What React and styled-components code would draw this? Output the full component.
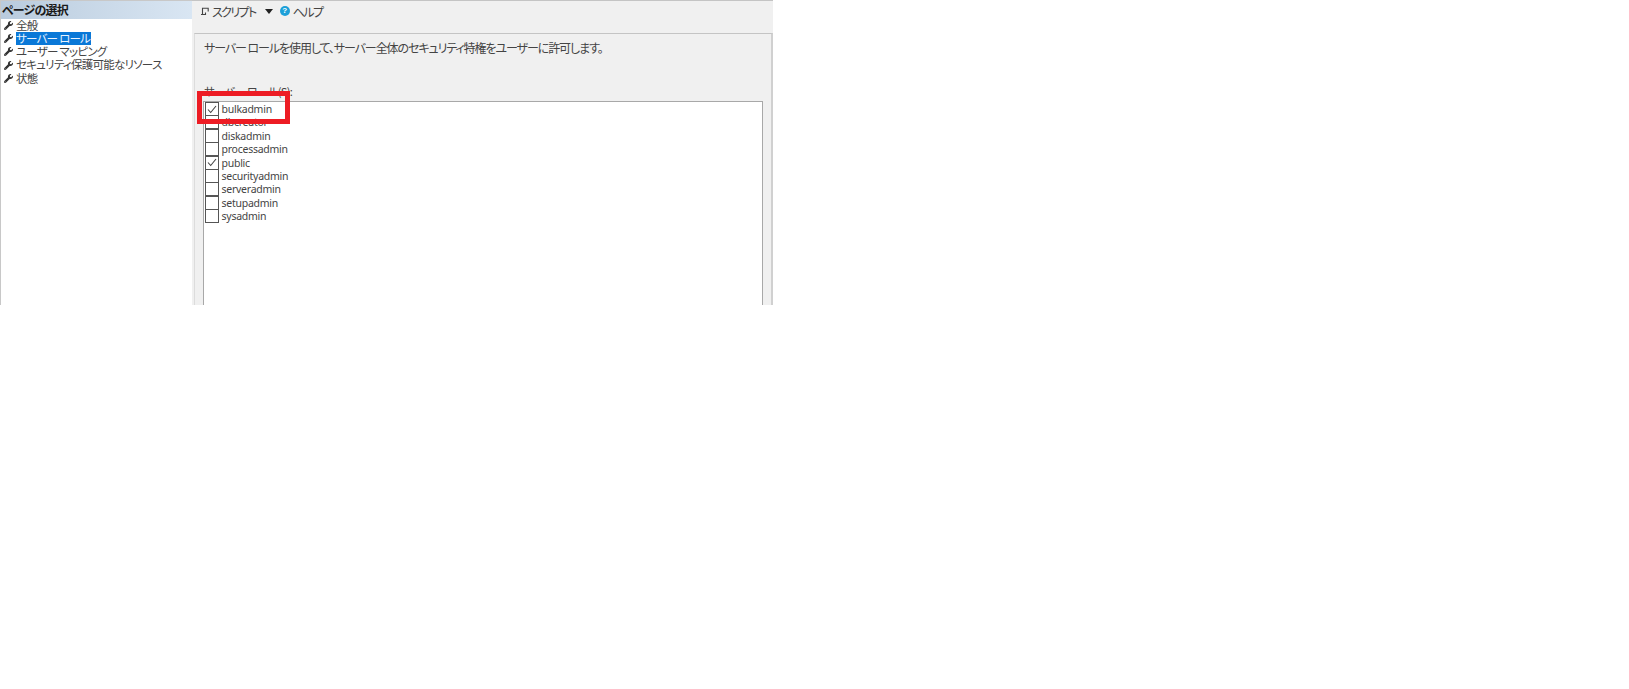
import React from "react";
import styled, { createGlobalStyle } from "styled-components";
import { FaWrench } from "react-icons/fa";

const Global = createGlobalStyle`
  html, body { margin: 0; padding: 0; background: #fff; }
  body {
    font-family: "Noto Sans CJK JP", "Noto Sans", sans-serif;
    font-feature-settings: "palt" 1;
  }
`;

const Window = styled.div`
  position: relative;
  display: flex;
  width: 773px;
  height: 305px;
  overflow: hidden;
`;

const Sidebar = styled.aside`
  flex: 0 0 192px;
  box-sizing: border-box;
  border-left: 1px solid #c8c8c8;
  border-top: 1px solid #c8c8c8;
  background: #fff;
`;

const SideHeader = styled.div`
  height: 17.6px;
  padding-left: 1px;
  display: flex;
  align-items: center;
  background: linear-gradient(90deg, #b9cbdd, #d9e6f3);
  font-size: 12px;
  font-weight: 700;
  letter-spacing: -0.8px;
  color: #1a1a1a;
  white-space: nowrap;
`;

const PageRow = styled.div`
  display: flex;
  align-items: center;
  height: 13.3px;
  padding-left: 3px;
  white-space: nowrap;
  color: #444;
  svg { flex: none; width: 9px; height: 9px; color: #333; margin-right: 3px; }
`;

const PageLabel = styled.span`
  display: inline-block;
  height: 13.3px;
  line-height: 13px;
  font-size: 11.5px;
  letter-spacing: -0.75px;
  padding-right: 1px;
  color: ${(p) => (p.$active ? "#e8f3ff" : "#444")};
  background: ${(p) => (p.$active ? "#0a78d7" : "transparent")};
`;

const Main = styled.main`
  flex: 1;
  display: flex;
  flex-direction: column;
  background: #f0f0f0;
  min-width: 0;
`;

const Toolbar = styled.div`
  flex: 0 0 33px;
  box-sizing: border-box;
  border-top: 1px solid #c4c4c4;
  padding: 0 0 12px 8px;
  display: flex;
  align-items: center;
  color: #444;
  font-size: 12px;
  letter-spacing: -1.6px;
  svg { flex: none; }
`;

const ToolText = styled.span`
  white-space: nowrap;
  margin-left: ${(p) => p.$gap || 0}px;
`;

const Caret = styled.span`
  width: 0;
  height: 0;
  margin: 1px 7px 0 9px;
  border-left: 4px solid transparent;
  border-right: 4px solid transparent;
  border-top: 5px solid #222;
`;

const HelpDot = styled.span`
  width: 10px;
  height: 10px;
  border-radius: 50%;
  background: #1c9fd8;
  color: #fff;
  font: 700 8px/10px "Liberation Sans", sans-serif;
  letter-spacing: 0;
  text-align: center;
`;

const Group = styled.section`
  flex: 1;
  margin-left: 2px;
  box-sizing: border-box;
  border-top: 1px solid #c4c4c4;
  border-right: 2px solid #d0d0d0;
  border-left: 1px solid #dcdcdc;
  padding: 7px 8px 0 8px;
  display: flex;
  flex-direction: column;
`;

const Description = styled.p`
  margin: 0 0 0 1px;
  height: 14px;
  line-height: 14px;
  font-size: 12px;
  letter-spacing: -1.08px;
  color: #444;
  white-space: nowrap;
`;

const ListCaption = styled.div`
  margin: 28px 0 0 1px;
  height: 18px;
  line-height: 16px;
  font-size: 11px;
  font-feature-settings: normal;
  letter-spacing: -0.7px;
  color: #444;
  white-space: nowrap;
`;

const RoleList = styled.div`
  flex: 1;
  border: 1px solid #a8a8a8;
  border-bottom: 0;
  background: #fff;
  padding: 0.3px 0 0 1px;
`;

const RoleRow = styled.label`
  display: flex;
  align-items: center;
  height: 13.4px;
`;

const Box = styled.span`
  flex: none;
  box-sizing: border-box;
  width: 14px;
  height: 14px;
  border: 1px solid #555;
  background: #fff;
  display: flex;
  align-items: center;
  justify-content: center;
`;

const RoleName = styled.span`
  margin-left: 2.5px;
  font-family: "Noto Sans", sans-serif;
  font-size: 10.5px;
  letter-spacing: -0.25px;
  color: #444;
`;

const Callout = styled.div`
  position: absolute;
  left: 197px;
  top: 91px;
  width: 93px;
  height: 33px;
  box-sizing: border-box;
  border: 5px solid #ed1c24;
  pointer-events: none;
`;

const pages = ["全般", "サーバー ロール", "ユーザー マッピング", "セキュリティ保護可能なリソース", "状態"];
const roles = [
  ["bulkadmin", true],
  ["dbcreator", false],
  ["diskadmin", false],
  ["processadmin", false],
  ["public", true],
  ["securityadmin", false],
  ["serveradmin", false],
  ["setupadmin", false],
  ["sysadmin", false],
];

const Check = () => (
  <svg width="10" height="9" viewBox="0 0 10 9" fill="none" stroke="#444" strokeWidth="1.1">
    <path d="M1 4.5 L3.7 7.5 L9 1" />
  </svg>
);

const ScriptIcon = () => (
  <svg width="9" height="9" viewBox="0 0 9 9" fill="none" stroke="#444" strokeWidth="1.1">
    <path d="M2.5 7V1.2H8.2V4.5M1 7.5H5.5V5.5" />
  </svg>
);

export default function App() {
  return (
    <>
      <Global />
      <Window>
        <Sidebar>
          <SideHeader>ページの選択</SideHeader>
          {pages.map((p, i) => (
            <PageRow key={p}>
              <FaWrench />
              <PageLabel $active={i === 1}>{p}</PageLabel>
            </PageRow>
          ))}
        </Sidebar>
        <Main>
          <Toolbar>
            <ScriptIcon />
            <ToolText $gap={3}>スクリプト</ToolText>
            <Caret />
            <HelpDot>?</HelpDot>
            <ToolText $gap={3}>ヘルプ</ToolText>
          </Toolbar>
          <Group>
            <Description>サーバー ロールを使用して、サーバー全体のセキュリティ特権をユーザーに許可します。</Description>
            <ListCaption>サーバー ロール(S):</ListCaption>
            <RoleList>
              {roles.map(([name, on]) => (
                <RoleRow key={name}>
                  <Box>{on && <Check />}</Box>
                  <RoleName>{name}</RoleName>
                </RoleRow>
              ))}
            </RoleList>
          </Group>
        </Main>
        <Callout />
      </Window>
    </>
  );
}
